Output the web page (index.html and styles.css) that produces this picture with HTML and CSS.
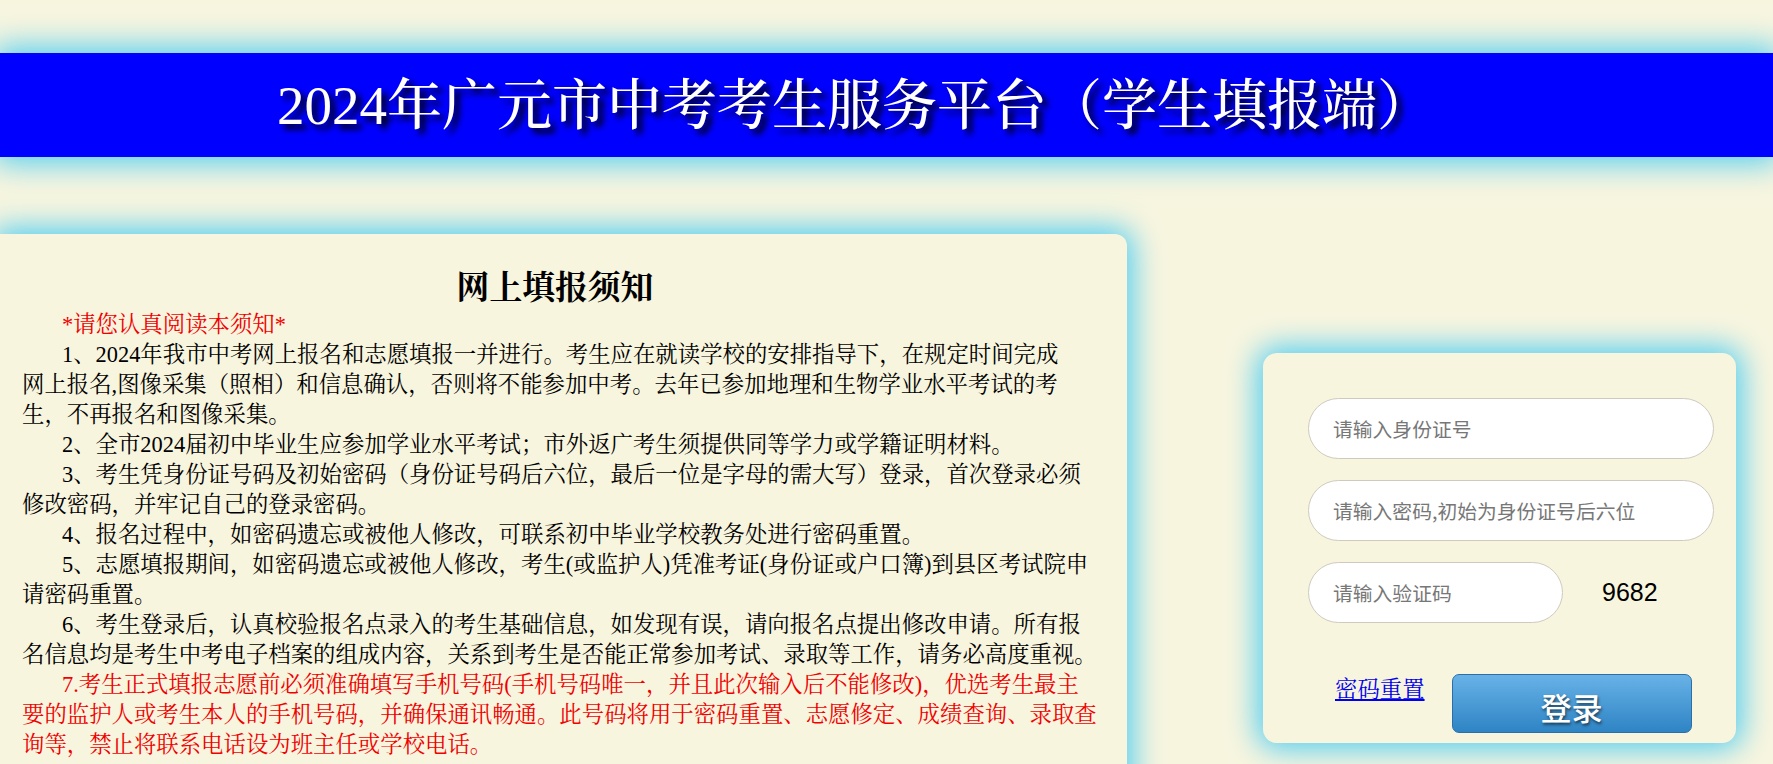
FILE: index.html
```html
<!DOCTYPE html>
<html lang="zh-CN">
<head>
<meta charset="utf-8">
<title>2024年广元市中考考生服务平台（学生填报端）</title>
<link rel="stylesheet" href="styles.css">
</head>
<body>
<header class="banner">
  <h1 class="banner-title">2024年广元市中考考生服务平台（学生填报端）</h1>
</header>
<main class="main">
  <section class="notice">
    <h2 class="notice-title">网上填报须知</h2>
    <p class="notice-line notice-warn">*请您认真阅读本须知*</p>
    <p class="notice-line notice-narrow">1、2024年我市中考网上报名和志愿填报一并进行。考生应在就读学校的安排指导下，在规定时间完成网上报名,图像采集（照相）和信息确认，否则将不能参加中考。去年已参加地理和生物学业水平考试的考生，不再报名和图像采集。</p>
    <p class="notice-line">2、全市2024届初中毕业生应参加学业水平考试；市外返广考生须提供同等学力或学籍证明材料。</p>
    <p class="notice-line">3、考生凭身份证号码及初始密码（身份证号码后六位，最后一位是字母的需大写）登录，首次登录必须修改密码，并牢记自己的登录密码。</p>
    <p class="notice-line">4、报名过程中，如密码遗忘或被他人修改，可联系初中毕业学校教务处进行密码重置。</p>
    <p class="notice-line">5、志愿填报期间，如密码遗忘或被他人修改，考生(或监护人)凭准考证(身份证或户口簿)到县区考试院申请密码重置。</p>
    <p class="notice-line">6、考生登录后，认真校验报名点录入的考生基础信息，如发现有误，请向报名点提出修改申请。所有报名信息均是考生中考电子档案的组成内容，关系到考生是否能正常参加考试、录取等工作，请务必高度重视。</p>
    <p class="notice-line notice-warn">7.考生正式填报志愿前必须准确填写手机号码(手机号码唯一，并且此次输入后不能修改)，优选考生最主要的监护人或考生本人的手机号码，并确保通讯畅通。此号码将用于密码重置、志愿修定、成绩查询、录取查询等，禁止将联系电话设为班主任或学校电话。</p>
  </section>
  <section class="login">
    <form class="login-form" onsubmit="return false;">
      <input class="field" type="text" placeholder="请输入身份证号">
      <input class="field" type="password" placeholder="请输入密码,初始为身份证号后六位">
      <div class="captcha-row">
        <input class="field field-short" type="text" placeholder="请输入验证码">
        <span class="captcha">9682</span>
      </div>
      <div class="actions">
        <a class="reset-link" href="#">密码重置</a>
        <button class="login-btn" type="button">登录</button>
      </div>
    </form>
  </section>
</main>
</body>
</html>
```
FILE: styles.css
```css
html {
  overflow: hidden;
}
body {
  margin: 0;
  background: #f8f5df;
  font-family: "Liberation Serif", "Noto Serif CJK SC", "Noto Sans CJK SC", serif;
  text-spacing-trim: space-all;
}

.banner {
  margin-top: 53px;
  height: 104px;
  background: #0000ff;
  box-shadow: 0 0 30px 6px #50cdf2;
  display: flex;
  align-items: center;
  padding-left: 277px;
}
.banner-title {
  margin: 0;
  color: #ffffff;
  font-size: 55px;
  font-weight: 500;
  line-height: 1;
  white-space: nowrap;
  text-shadow: 5px 5px 6px #000000;
}

.main {
  display: flex;
  justify-content: space-between;
  align-items: flex-start;
  margin-top: 77px;
  padding-right: 37px;
}

.notice {
  width: 1127px;
  box-sizing: border-box;
  padding: 35px 28px 40px 22px;
  background: #f8f5df;
  border-radius: 0 12px 0 0;
  box-shadow: 0 0 30px 6px #50cdf2;
}
.notice-title {
  margin: 0 0 3px;
  padding-right: 11px;
  text-align: center;
  font-size: 32.8px;
  line-height: 38px;
  font-weight: bold;
  color: #000;
}
.notice-line {
  margin: 0;
  font-size: 22.4px;
  line-height: 30px;
  text-indent: 40px;
  color: #000;
}
.notice-narrow {
  margin-right: 30px;
}
.notice-warn {
  color: #f00000;
}

.login {
  width: 473px;
  box-sizing: border-box;
  margin-top: 119px;
  padding: 45px 22px 10px 45px;
  background: #f8f5df;
  border-radius: 14px;
  box-shadow: 0 0 30px 6px #50cdf2;
}
.login-form {
  display: flex;
  flex-direction: column;
  gap: 21px;
}
.field {
  display: block;
  width: 406px;
  height: 61px;
  box-sizing: border-box;
  margin: 0;
  padding: 0 24px;
  border: 1px solid #cfcac0;
  border-radius: 31px;
  background: #ffffff;
  font-family: "Noto Sans CJK SC", "Liberation Sans", sans-serif;
  font-size: 19.8px;
  color: #333;
  outline: none;
}
.field::placeholder {
  color: #777777;
}
.captcha-row {
  display: flex;
  align-items: center;
}
.field-short {
  width: 255px;
}
.captcha {
  margin-left: 39px;
  font-family: "Liberation Sans", Arial, sans-serif;
  font-size: 25px;
  color: #000;
}
.actions {
  display: flex;
  align-items: flex-start;
  margin-top: 30px;
}
.reset-link {
  margin-left: 27px;
  margin-top: 3px;
  font-size: 22.4px;
  line-height: 26px;
  color: #0000ee;
  text-decoration: underline;
}
.login-btn {
  margin-left: 27px;
  width: 240px;
  height: 59px;
  border: 1px solid #2b6ea8;
  border-radius: 7px;
  background: linear-gradient(#68b2e7, #2e84c4);
  color: #ffffff;
  font-family: "Noto Sans CJK SC", sans-serif;
  font-size: 31px;
  font-weight: 500;
  padding: 6px 0 0;
  text-shadow: 1px 2px 3px rgba(0, 0, 0, 0.6);
  cursor: pointer;
}
```
